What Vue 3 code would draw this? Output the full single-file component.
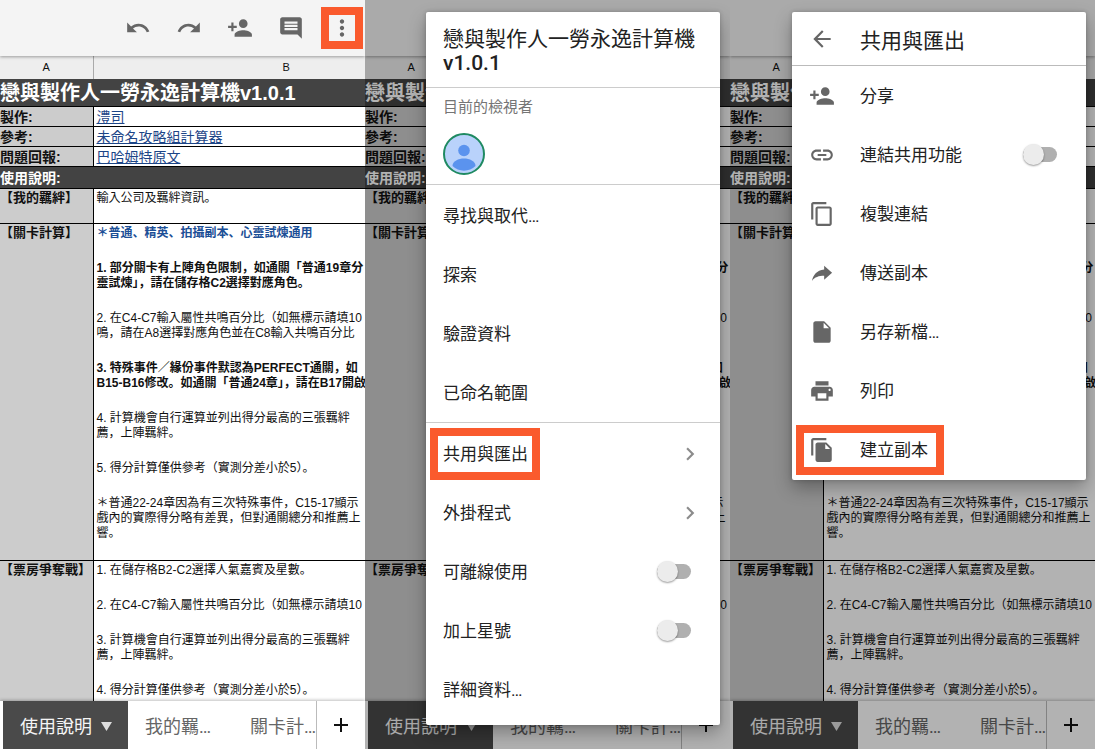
<script setup>
import { ref } from 'vue'

const icons = {
  undo: 'M12.5 8c-2.65 0-5.05.99-6.9 2.6L2 7v9h9l-3.62-3.62c1.39-1.16 3.16-1.88 5.12-1.88 3.54 0 6.55 2.31 7.6 5.5l2.37-.78C21.08 11.03 17.15 8 12.5 8z',
  redo: 'M18.4 10.6C16.55 8.99 14.15 8 11.5 8c-4.65 0-8.58 3.03-9.96 7.22L3.9 16c1.05-3.19 4.05-5.5 7.6-5.5 1.95 0 3.73.72 5.12 1.88L13 16h9V7l-3.6 3.6z',
  personAdd: 'M15 12c2.21 0 4-1.79 4-4s-1.79-4-4-4-4 1.79-4 4 1.79 4 4 4zm-9-2V7H4v3H1v2h3v3h2v-3h3v-2H6zm9 4c-2.67 0-8 1.34-8 4v2h16v-2c0-2.66-5.33-4-8-4z',
  comment: 'M21.99 4c0-1.1-.89-2-1.99-2H4c-1.1 0-2 .9-2 2v12c0 1.1.9 2 2 2h14l4 4-.01-18zM18 14H6v-2h12v2zm0-3H6V9h12v2zm0-3H6V6h12v2z',
  more: 'M12 8c1.1 0 2-.9 2-2s-.9-2-2-2-2 .9-2 2 .9 2 2 2zm0 2c-1.1 0-2 .9-2 2s.9 2 2 2 2-.9 2-2-.9-2-2-2zm0 6c-1.1 0-2 .9-2 2s.9 2 2 2 2-.9 2-2-.9-2-2-2z',
  back: 'M20 11H7.83l5.59-5.59L12 4l-8 8 8 8 1.41-1.41L7.83 13H20v-2z',
  chevron: 'M10 6L8.59 7.41 13.17 12l-4.58 4.59L10 18l6-6z',
  link: 'M3.9 12c0-1.71 1.39-3.1 3.1-3.1h4V7H7c-2.76 0-5 2.24-5 5s2.24 5 5 5h4v-1.9H7c-1.71 0-3.1-1.39-3.1-3.1zM8 13h8v-2H8v2zm9-6h-4v1.9h4c1.71 0 3.1 1.39 3.1 3.1s-1.39 3.1-3.1 3.1h-4V17h4c2.76 0 5-2.24 5-5s-2.24-5-5-5z',
  copy: 'M16 1H4c-1.1 0-2 .9-2 2v14h2V3h12V1zm3 4H8c-1.1 0-2 .9-2 2v14c0 1.1.9 2 2 2h11c1.1 0 2-.9 2-2V7c0-1.1-.9-2-2-2zm0 16H8V7h11v14z',
  send: 'M14 8.8V5.2l7.3 6.6-7.3 6.4v-3.7c-5 0-8.7 1.2-11.3 4.8 1.2-5.4 4.3-9.6 11.3-10.5z',
  file: 'M14 2H6c-1.1 0-2 .9-2 2v16c0 1.1.9 2 2 2h12c1.1 0 2-.9 2-2V8l-6-6zm-.5 6.5V3.5l5 5h-5z',
  print: 'M19 8H5c-1.66 0-3 1.34-3 3v6h4v4h12v-4h4v-6c0-1.66-1.34-3-3-3zm-3 11H8v-5h8v5zm3-7c-.55 0-1-.45-1-1s.45-1 1-1 1 .45 1 1-.45 1-1 1zm-1-9H6v4h12V3z',
  fileCopy: 'M16 1H4c-1.1 0-2 .9-2 2v14h2V3h12V1zm0 4l5 5v11c0 1.1-.9 2-2 2H8c-1.1 0-2-.9-2-2V7c0-1.1.9-2 2-2h8zm-1 6h4.5L15 6.5V11z',
}

const tools = [
  { name: '復原', icon: 'undo' },
  { name: '重做', icon: 'redo' },
  { name: '新增共用者', icon: 'personAdd' },
  { name: '註解', icon: 'comment' },
  { name: '更多', icon: 'more' },
]

const credits = [
  { label: '製作:', link: '澧司' },
  { label: '參考:', link: '未命名攻略組計算器' },
  { label: '問題回報:', link: '巴哈姆特原文' },
]

const guides = [
  {
    label: '【我的羈絆】',
    size: 'short',
    notes: [{ lines: ['輸入公司及羈絆資訊。'] }],
  },
  {
    label: '【關卡計算】',
    size: 'tall',
    notes: [
      { kind: 'lead', lines: ['＊普通、精英、拍攝副本、心靈試煉通用'] },
      { kind: 'strong', lines: ['1. 部分關卡有上陣角色限制，如通關「普通19章分', '靈試煉」，請在儲存格C2選擇對應角色。'] },
      { lines: ['2. 在C4-C7輸入屬性共鳴百分比（如無標示請填10', '鳴，請在A8選擇對應角色並在C8輸入共鳴百分比'] },
      { kind: 'strong', lines: ['3. 特殊事件／緣份事件默認為PERFECT通關，如', 'B15-B16修改。如通關「普通24章」，請在B17開啟'] },
      { lines: ['4. 計算機會自行運算並列出得分最高的三張羈絆', '薦，上陣羈絆。'] },
      { lines: ['5. 得分計算僅供參考（實測分差小於5）。'] },
      { lines: ['＊普通22-24章因為有三次特殊事件，C15-17顯示', '戲內的實際得分略有差異，但對通關總分和推薦上', '響。'] },
    ],
  },
  {
    label: '【票房爭奪戰】',
    size: 'last',
    notes: [
      { lines: ['1. 在儲存格B2-C2選擇人氣嘉賓及星數。'] },
      { lines: ['2. 在C4-C7輸入屬性共鳴百分比（如無標示請填10'] },
      { lines: ['3. 計算機會自行運算並列出得分最高的三張羈絆', '薦，上陣羈絆。'] },
      { lines: ['4. 得分計算僅供參考（實測分差小於5）。'] },
    ],
  },
]

const screens = [{ menu: null }, { menu: 'main' }, { menu: 'share' }]

const offline = ref(false)
const starred = ref(false)
const linkSharing = ref(false)
</script>

<template>
  <main class="screens">
    <section v-for="(screen, i) in screens" :key="i" class="screen">
      <header class="toolbar">
        <button
          v-for="tool in tools"
          :key="tool.icon"
          type="button"
          :class="{ marked: tool.icon === 'more' && !screen.menu }"
          :aria-label="tool.name"
        >
          <svg class="icon" viewBox="0 0 24 24"><path :d="icons[tool.icon]" /></svg>
        </button>
      </header>

      <div class="sheet">
        <table>
          <colgroup><col class="col-a" /><col class="col-b" /></colgroup>
          <thead>
            <tr><th scope="col">A</th><th scope="col">B</th></tr>
          </thead>
          <tbody>
            <tr class="title"><td colspan="2">戀與製作人一勞永逸計算機v1.0.1</td></tr>
            <tr v-for="credit in credits" :key="credit.label" class="credit">
              <th scope="row">{{ credit.label }}</th>
              <td><a href="#">{{ credit.link }}</a></td>
            </tr>
            <tr class="section"><td colspan="2">使用說明:</td></tr>
            <tr v-for="guide in guides" :key="guide.label" class="guide" :class="guide.size">
              <th scope="row">{{ guide.label }}</th>
              <td>
                <p v-for="(note, n) in guide.notes" :key="n" :class="note.kind">
                  <template v-for="(line, l) in note.lines" :key="l"><br v-if="l" />{{ line }}</template>
                </p>
              </td>
            </tr>
          </tbody>
        </table>
      </div>

      <nav class="tabs">
        <button type="button" class="tab active">
          使用說明
          <svg class="caret" viewBox="0 0 11 9"><path d="M0 0h11L5.5 9z" /></svg>
        </button>
        <button type="button" class="tab">我的羈…</button>
        <button type="button" class="tab third">關卡計…</button>
        <button type="button" class="add" aria-label="新增工作表">
          <svg viewBox="0 0 16 16"><path d="M7 1h2v6h6v2H9v6H7V9H1V7h6z" /></svg>
        </button>
      </nav>

      <div v-if="screen.menu" class="scrim">
        <div v-if="screen.menu === 'main'" class="menu">
          <h2 class="menu-title">戀與製作人一勞永逸計算機<br /><span class="version">v1.0.1</span></h2>
          <div class="viewers">
            <p>目前的檢視者</p>
            <svg class="avatar" viewBox="0 0 42 42">
              <circle cx="21" cy="21" r="20" class="avatar-back" />
              <circle cx="21" cy="17.5" r="5.8" class="avatar-person" />
              <path d="M9.5 33c0-5 6-7.5 11.5-7.5S32.5 28 32.5 33a16.6 16.6 0 0 1-23 0z" class="avatar-person" />
            </svg>
          </div>
          <div class="group">
            <button type="button" class="item">尋找與取代…</button>
            <button type="button" class="item">探索</button>
            <button type="button" class="item">驗證資料</button>
            <button type="button" class="item">已命名範圍</button>
          </div>
          <div class="group">
            <button type="button" class="item">
              <span class="marked-label">共用與匯出</span>
              <svg class="icon chevron" viewBox="0 0 24 24"><path :d="icons.chevron" /></svg>
            </button>
            <button type="button" class="item">
              外掛程式
              <svg class="icon chevron" viewBox="0 0 24 24"><path :d="icons.chevron" /></svg>
            </button>
            <div class="item">
              <label for="offline">可離線使用</label>
              <input id="offline" v-model="offline" type="checkbox" class="switch" />
            </div>
            <div class="item">
              <label for="starred">加上星號</label>
              <input id="starred" v-model="starred" type="checkbox" class="switch" />
            </div>
            <button type="button" class="item">詳細資料…</button>
          </div>
        </div>

        <div v-else class="menu share">
          <div class="share-head">
            <button type="button" aria-label="返回">
              <svg class="icon" viewBox="0 0 24 24"><path :d="icons.back" /></svg>
            </button>
            <h2>共用與匯出</h2>
          </div>
          <button type="button" class="item">
            <span class="entry"><svg class="icon" viewBox="0 0 24 24"><path :d="icons.personAdd" /></svg>分享</span>
          </button>
          <div class="item">
            <label for="link-sharing" class="entry">
              <svg class="icon" viewBox="0 0 24 24"><path :d="icons.link" /></svg>連結共用功能
            </label>
            <input id="link-sharing" v-model="linkSharing" type="checkbox" class="switch" />
          </div>
          <button type="button" class="item">
            <span class="entry"><svg class="icon" viewBox="0 0 24 24"><path :d="icons.copy" /></svg>複製連結</span>
          </button>
          <button type="button" class="item">
            <span class="entry"><svg class="icon" viewBox="0 0 24 24"><path :d="icons.send" /></svg>傳送副本</span>
          </button>
          <button type="button" class="item">
            <span class="entry"><svg class="icon" viewBox="0 0 24 24"><path :d="icons.file" /></svg>另存新檔…</span>
          </button>
          <button type="button" class="item">
            <span class="entry"><svg class="icon" viewBox="0 0 24 24"><path :d="icons.print" /></svg>列印</span>
          </button>
          <button type="button" class="item">
            <span class="entry marked-entry"><svg class="icon" viewBox="0 0 24 24"><path :d="icons.fileCopy" /></svg>建立副本</span>
          </button>
        </div>
      </div>
    </section>
  </main>
</template>

<style>
body {
  margin: 0;
}
</style>

<style scoped>
.screens {
  display: grid;
  grid-template-columns: repeat(3, minmax(0, 1fr));
  height: 100vh;
  font-family: Roboto, "Noto Sans CJK JP", sans-serif;
  color: #222;
}

.screen {
  position: relative;
  display: flex;
  flex-direction: column;
  min-height: 0;
  overflow: hidden;
  background: #fff;
}

button {
  padding: 0;
  border: 0;
  background: none;
  font: inherit;
  color: inherit;
  text-align: left;
}

.icon {
  display: block;
  flex: none;
  width: 26px;
  height: 26px;
  fill: #666;
}

.toolbar {
  z-index: 1;
  display: flex;
  flex: none;
  align-items: center;
  justify-content: flex-end;
  gap: 25px;
  height: 56px;
  padding-right: 10px;
  background: #f4f4f4;
  box-shadow: 0 1px 3px rgba(0, 0, 0, 0.35);
}

.marked {
  outline: 8px solid #fa5a2d;
}

.sheet {
  flex: 1;
  min-height: 0;
  overflow: hidden;
  font-family: "Liberation Sans", "Noto Sans CJK JP", sans-serif;
  color: #111;
}

table {
  width: 480px;
  table-layout: fixed;
  border-collapse: collapse;
}

.col-a {
  width: 93px;
}

th,
td {
  padding: 0;
  white-space: nowrap;
  text-align: left;
}

thead th {
  height: 23px;
  background: #eee;
  border-right: 1px solid #aaa;
  font-size: 11px;
  font-weight: 400;
  line-height: 15px;
  text-align: center;
}

.title td,
.section td {
  background: #434343;
  color: #fff;
  font-weight: 700;
}

.title td {
  height: 27px;
  font-size: 20px;
  line-height: 26px;
}

.credit th,
.section td {
  font-size: 14px;
  line-height: 18px;
}

.credit th,
.credit td {
  height: 19px;
  border: 1px solid #000;
}

.credit td,
.guide td {
  padding-left: 3px;
}

.credit td {
  font-size: 14px;
  line-height: 18px;
}

.credit th,
.guide th {
  border-left: 0;
  background: #ccc;
}

.section td {
  height: 21px;
}

a {
  color: #1c4587;
}

.guide th,
.guide td {
  padding-top: 2px;
  border: 1px solid #000;
  border-left: 0;
  font-size: 12px;
  line-height: 15px;
  vertical-align: top;
}

.guide th {
  padding-top: 1px;
  font-size: 13px;
}

.short th {
  height: 33px;
}

.tall th {
  height: 335px;
}

.last th {
  height: 150px;
}

p {
  margin: 0;
}

.guide p + p {
  margin-top: 20px;
}

.lead {
  font-weight: 700;
  color: #1c4f96;
}

.strong {
  font-weight: 700;
}

.tabs {
  z-index: 1;
  display: flex;
  flex: none;
  height: 48px;
  padding-left: 3px;
  background: #fff;
  box-shadow: 0 -1px 3px rgba(0, 0, 0, 0.25);
  font-size: 18px;
  color: #666;
}

.tab {
  display: flex;
  flex: none;
  align-items: center;
  padding: 3px 0 0 17px;
  line-height: 24px;
  white-space: nowrap;
}

.active {
  gap: 9px;
  padding-right: 16px;
  background: #4a4a4a;
  color: #f5f5f5;
}

.third {
  flex: 1;
  justify-content: flex-end;
}

.caret {
  width: 11px;
  height: 9px;
  fill: #ddd;
}

.add {
  display: grid;
  flex: none;
  place-items: center;
  width: 49px;
  border-left: 1px solid #bbb;
}

.add svg {
  width: 16px;
  height: 16px;
  fill: #111;
}

.scrim {
  position: absolute;
  inset: 0;
  z-index: 2;
  background: rgba(0, 0, 0, 0.3);
}

.menu {
  position: absolute;
  top: 12px;
  right: 10px;
  left: 61px;
  padding-bottom: 6px;
  border-radius: 2px;
  background: #fff;
  box-shadow: 0 8px 18px rgba(0, 0, 0, 0.3), 0 0 4px rgba(0, 0, 0, 0.2);
  font-size: 17px;
}

.share {
  right: 9px;
  left: 62px;
  padding-bottom: 1px;
}

h2 {
  margin: 0;
  font-size: 21px;
  font-weight: 400;
  line-height: 24px;
}

.menu-title {
  padding: 15px 17px 12px;
  border-bottom: 1px solid #ccc;
}

.version {
  font-weight: 500;
}

.viewers {
  padding: 9px 17px;
  border-bottom: 1px solid #ccc;
  font-size: 15px;
  line-height: 20px;
  color: #757575;
}

.avatar {
  display: block;
  width: 42px;
  height: 42px;
  margin-top: 16px;
}

.avatar-back {
  fill: #b9d2fb;
  stroke: #1f8a62;
  stroke-width: 2;
}

.avatar-person {
  fill: #5b93ee;
}

.group {
  padding-top: 1px;
}

.group + .group {
  border-top: 1px solid #ccc;
}

.item {
  display: flex;
  align-items: center;
  justify-content: space-between;
  box-sizing: border-box;
  width: 100%;
  height: 59px;
  padding: 0 29px 0 17px;
  line-height: 34px;
}

.chevron {
  margin-right: -12px;
  fill: #8c8c8c;
}

.marked-label {
  margin: 0 -5px;
  padding: 1px 4px 1px 5px;
  outline: 8px solid #fa5a2d;
}

.switch {
  position: relative;
  flex: none;
  width: 34px;
  height: 15px;
  margin: 0;
  border-radius: 8px;
  background: #b0b0b0;
  appearance: none;
}

.switch::before {
  position: absolute;
  top: -3px;
  left: 0;
  width: 21px;
  height: 21px;
  border-radius: 50%;
  background: #ececec;
  box-shadow: 0 1px 2px rgba(0, 0, 0, 0.4);
  content: "";
}

.switch:checked::before {
  left: 13px;
}

.share-head {
  display: flex;
  align-items: center;
  gap: 25px;
  height: 53px;
  padding: 0 17px;
  border-bottom: 1px solid #bbb;
}

.share-head h2 {
  padding-top: 4px;
}

.entry {
  display: flex;
  align-items: center;
  gap: 25px;
}

.marked-entry {
  margin: 0 -8px 0 -5px;
  padding: 0 8px 0 5px;
  outline: 8px solid #fa5a2d;
}
</style>
